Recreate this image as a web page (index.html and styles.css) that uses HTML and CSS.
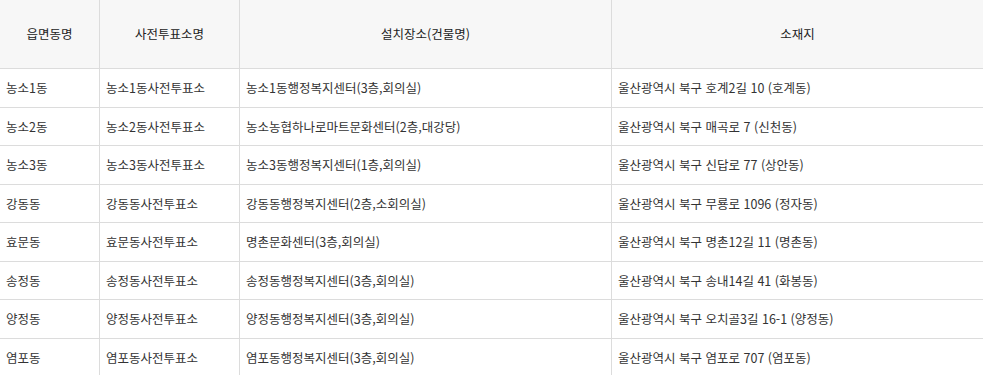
FILE: index.html
```html
<!DOCTYPE html>
<html lang="ko">
<head>
<meta charset="utf-8">
<title>사전투표소</title>
<link rel="stylesheet" href="styles.css">
</head>
<body>
<table class="vote-table">
  <colgroup>
    <col class="c1"><col class="c2"><col class="c3"><col class="c4">
  </colgroup>
  <thead>
    <tr><th>읍면동명</th><th>사전투표소명</th><th>설치장소(건물명)</th><th>소재지</th></tr>
  </thead>
  <tbody>
    <tr><td>농소1동</td><td>농소1동사전투표소</td><td>농소1동행정복지센터(3층,회의실)</td><td>울산광역시 북구 호계2길 10 (호계동)</td></tr>
    <tr><td>농소2동</td><td>농소2동사전투표소</td><td>농소농협하나로마트문화센터(2층,대강당)</td><td>울산광역시 북구 매곡로 7 (신천동)</td></tr>
    <tr><td>농소3동</td><td>농소3동사전투표소</td><td>농소3동행정복지센터(1층,회의실)</td><td>울산광역시 북구 신답로 77 (상안동)</td></tr>
    <tr><td>강동동</td><td>강동동사전투표소</td><td>강동동행정복지센터(2층,소회의실)</td><td>울산광역시 북구 무룡로 1096 (정자동)</td></tr>
    <tr><td>효문동</td><td>효문동사전투표소</td><td>명촌문화센터(3층,회의실)</td><td>울산광역시 북구 명촌12길 11 (명촌동)</td></tr>
    <tr><td>송정동</td><td>송정동사전투표소</td><td>송정동행정복지센터(3층,회의실)</td><td>울산광역시 북구 송내14길 41 (화봉동)</td></tr>
    <tr><td>양정동</td><td>양정동사전투표소</td><td>양정동행정복지센터(3층,회의실)</td><td>울산광역시 북구 오치골3길 16-1 (양정동)</td></tr>
    <tr><td>염포동</td><td>염포동사전투표소</td><td>염포동행정복지센터(3층,회의실)</td><td>울산광역시 북구 염포로 707 (염포동)</td></tr>
  </tbody>
</table>
</body>
</html>
```
FILE: styles.css
```css
html, body {
  margin: 0;
  padding: 0;
  background: #fff;
}
body {
  font-family: "Noto Sans CJK KR", "Noto Sans", sans-serif;
  font-size: 12.5px;
  color: #333;
}
.vote-table {
  width: 983px;
  table-layout: fixed;
  border-collapse: separate;
  border-spacing: 0;
}
.c1 { width: 100px; }
.c2 { width: 140px; }
.c3 { width: 372px; }
.c4 { width: 371px; }
.vote-table th,
.vote-table td {
  border-right: 1px solid #dcdcdc;
  border-bottom: 1px solid #dcdcdc;
  line-height: 17.5px;
  white-space: nowrap;
  overflow: hidden;
}
.vote-table th:last-child,
.vote-table td:last-child {
  border-right: 0;
}
.vote-table th {
  background: #f7f7f7;
  font-weight: 400;
  font-size: 12.5px;
  text-align: center;
  padding: 25px 6px 25px;
  height: 18px;
  line-height: 18px;
  color: #222;
}
.vote-table td {
  text-align: left;
  padding: 10px 6px;
}
```
